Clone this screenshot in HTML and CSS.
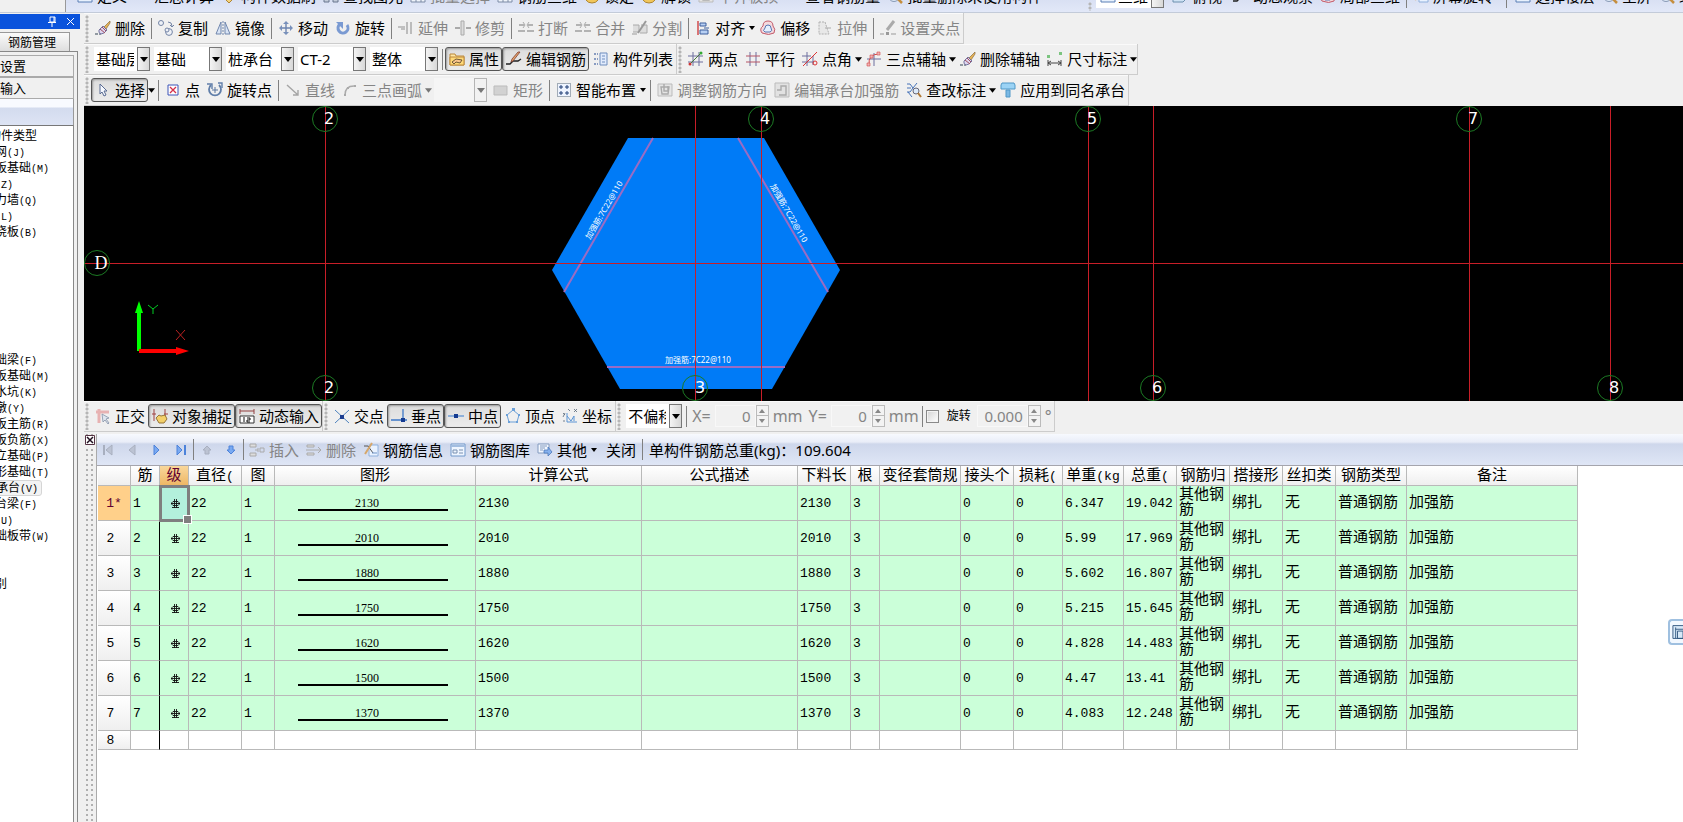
FILE: index.html
```html
<!DOCTYPE html>
<html lang="zh-CN">
<head>
<meta charset="utf-8">
<title>钢筋管理</title>
<link rel="stylesheet" href="styles.css">
</head>
<body>
<svg class="sprite" aria-hidden="true">
  <symbol id="brush" viewBox="0 0 16 16"><path d="M0 14h3m1 0h2" stroke="#345" /><path d="M15 1 9 7l2 2 4-6z" fill="#e7b557" stroke="#8b6b3d" stroke-width=".7"/><path d="M8 6 4 10q-1 3 2 4 3 0 6-4z" fill="#ddd6ef" stroke="#5a5b8c" stroke-width=".8"/><path d="m5 9 5 4M7 7l4 4" stroke="#a25062"/></symbol>
  <symbol id="copy" viewBox="0 0 16 16"><g fill="#eef1f7" stroke="#7384a5"><circle cx="3" cy="3" r="2.5"/><circle cx="11" cy="12" r="3.4"/><circle cx="9" cy="10" r="2"/><path d="M10 2q4 0 4 4m-2-1 2 2 2-2" fill="none"/></g></symbol>
  <symbol id="mirror" viewBox="0 0 16 16"><path d="M6 2v12H1zM10 2v12h5z" fill="#d8e4f6" stroke="#7187ad"/><path d="M8 1v14" stroke="#7187ad" stroke-dasharray="2 1"/></symbol>
  <symbol id="move" viewBox="0 0 16 16"><path d="M8 2v12M2 8h12" stroke="#6c84b0" stroke-width="1.4"/><path d="m5 4 3-3 3 3zM5 12l3 3 3-3zM4 5 1 8l3 3zM12 5l3 3-3 3z" fill="#7890ba"/></symbol>
  <symbol id="rotate" viewBox="0 0 16 16"><path d="M5 4a5 5 0 1 0 7 1" fill="none" stroke="#7a9ad2" stroke-width="3"/><path d="M1 2h7v7z" fill="#7a9ad2"/></symbol>
  <symbol id="extend" viewBox="0 0 16 16"><path d="M0 7h7M3 9h4M9 2v12M13 2v12" stroke="#b0b0b0" stroke-width="1.6"/></symbol>
  <symbol id="trim" viewBox="0 0 16 16"><path d="M0 8h5m6 0h5" stroke="#aaa" stroke-width="2"/><path d="M6 1h3v14H6z" fill="#ddd" stroke="#aaa"/></symbol>
  <symbol id="break" viewBox="0 0 16 16"><path d="M1 5h5M10 5h5M0 11h7M9 11h7" stroke="#b3b3b3" stroke-width="2"/><path d="m5 2 2 3-2 3M11 2 9 5l2 3" fill="none" stroke="#aaa"/></symbol>
  <symbol id="split" viewBox="0 0 16 16"><path d="M1 5h6v7H1m8-7h6v8H8" fill="#ddd" stroke="#aaa"/><path d="m14 1-8 12" stroke="#999" stroke-width="2"/><path d="M0 14h5" stroke="#999"/></symbol>
  <symbol id="align" viewBox="0 0 16 16"><path d="M3 1v14" stroke="#c33" stroke-width="1.3"/><path d="M5 3h6v3H5zM5 10h8v4H5z" fill="#b8d0f3" stroke="#3d5f9d"/><path d="M9 8h5" stroke="#3d5f9d"/></symbol>
  <symbol id="offset" viewBox="0 0 16 16"><path d="M8 1q5 0 5 5 3 3 1 7-5 3-12 0-3-4 1-7 0-5 5-5z" fill="#f4d9dd" stroke="#c25b6b"/><path d="M8 5q3 0 3 3 2 3-1 4H5q-3-1 0-4 0-3 3-3z" fill="#e4effc" stroke="#5577b5"/></symbol>
  <symbol id="stretch" viewBox="0 0 16 16"><path d="M2 2h6l4 12H2z" fill="#e8e8e8" stroke="#b0b0b0" stroke-dasharray="2 1"/><path d="M8 8h6" stroke="#aaa"/></symbol>
  <symbol id="grip" viewBox="0 0 16 16"><path d="m14 1-7 9" stroke="#aaa" stroke-width="3"/><path d="M0 14h4m7 0h5" stroke="#999"/><path d="M6 12h3v3H6z" fill="#999"/></symbol>
  <symbol id="props" viewBox="0 0 16 16"><path d="M1 3h5l1 2h8v9H1z" fill="#ffe7a3" stroke="#bc883b"/><path d="M1 6h14v8H1z" fill="#ffd978" stroke="#bc883b"/><path d="m3 11 4-3 6 1-2 3-4-1-2 2z" fill="#f9c58e" stroke="#4d3c25" stroke-width=".8"/></symbol>
  <symbol id="editbar" viewBox="0 0 16 16"><path d="M0 13h4l3-3h5l3-2" fill="none" stroke="#222" stroke-width="1.4"/><path d="m14 1-7 9-2 1 1-3 6-7z" fill="#e6a66a" stroke="#7c3c33" stroke-width=".8"/></symbol>
  <symbol id="list" viewBox="0 0 16 16"><path d="M1 3h4M1 8h4M1 13h4" stroke="#889bc1" stroke-width="2" stroke-dasharray="2 1"/><path d="M7 2h7v12H7z" fill="#e1ebfc" stroke="#6f8dbd"/><path d="M9 5h3M9 8h3M9 11h3" stroke="#6f8dbd"/></symbol>
  <symbol id="twopt" viewBox="0 0 16 16"><path d="M5 1v14M11 1v14M0 5h15M0 11h15" stroke="#6d6f9e"/><path d="M2 13 13 2" stroke="#4b7b3e"/><circle cx="2" cy="13" r="1.5" fill="#c33"/><circle cx="13" cy="2" r="1.5" fill="#3a3"/></symbol>
  <symbol id="parallel" viewBox="0 0 16 16"><path d="M5 1v14M11 1v14" stroke="#6d6f9e"/><path d="M1 5h14M1 11h14" stroke="#b65566"/></symbol>
  <symbol id="ptangle" viewBox="0 0 16 16"><path d="M5 1v14M11 5v9M0 5h9M0 11h12" stroke="#6d6f9e"/><path d="M1 15 15 1" stroke="#d33"/><circle cx="13" cy="12" r="2" fill="none" stroke="#d33"/></symbol>
  <symbol id="threept" viewBox="0 0 16 16"><path d="M8 2v13M1 8h14" stroke="#6d6f9e"/><path d="M3 14Q2 3 13 3" fill="none" stroke="#d34a4a"/><path d="M11 1h3v3h-3zM1 12h3v3H1zM4 4h3v3H4z" fill="#f0b4b4" stroke="#d34a4a" stroke-width=".6"/></symbol>
  <symbol id="dim" viewBox="0 0 16 16"><path d="M1 9v6m13-6v6M1 12h13" stroke="#444"/><path d="m4 10-3 2 3 2m7-4 3 2-3 2" fill="none" stroke="#444"/><path d="M0 4h3v3H0zM12 1h3v3h-3z" fill="#7bc47f"/></symbol>
  <symbol id="cursor" viewBox="0 0 16 16"><path d="M5 2v10l2-2 2 4 2-1-2-4h3z" fill="#f6f9ff" stroke="#596b92"/></symbol>
  <symbol id="point" viewBox="0 0 16 16"><path d="M3 3h10v10H3z" fill="#fff" stroke="#3d55b8"/><path d="m5 5 6 6m0-6-6 6" stroke="#d32f4b" stroke-width="1.3"/></symbol>
  <symbol id="rotpt" viewBox="0 0 16 16"><path d="M4 3a6 6 0 1 0 8 0" fill="none" stroke="#607ea9" stroke-width="1.8"/><path d="M0 2h5v5M15 6V1h-4" fill="none" stroke="#607ea9" stroke-width="1.4"/><path d="M8 5v6M5 8h6" stroke="#58759e"/></symbol>
  <symbol id="line" viewBox="0 0 16 16"><path d="m2 3 11 10m0-5v5H8" fill="none" stroke="#a5a5a5" stroke-width="1.4"/></symbol>
  <symbol id="arc" viewBox="0 0 16 16"><path d="M3 13Q3 4 12 4" fill="none" stroke="#aaa" stroke-width="1.4"/><path d="M2 12h2v2H2zM5 5h2v2H5zM12 3h2v2h-2z" fill="#aaa"/></symbol>
  <symbol id="rect" viewBox="0 0 16 16"><path d="M1 4h13v9H1z" fill="#d2d2d2" stroke="#bbb"/></symbol>
  <symbol id="smart" viewBox="0 0 16 16"><path d="M1.500 1.500h13v13h-13z" fill="#eef4ff" stroke="#567" stroke-dasharray="1 1"/><path d="M5 3v4M3 5h4M11 3v4M9 5h4M5 9v4M3 11h4M11 9v4M9 11h4" stroke="#1f3d75"/></symbol>
  <symbol id="adjust" viewBox="0 0 16 16"><path d="M1 2h14v12H1z" fill="#e5e5e5" stroke="#bbb"/><path d="M4 5h8l-1 7H5zM7 2v7h4V4" fill="none" stroke="#aaa" stroke-width="1.4"/></symbol>
  <symbol id="editcap" viewBox="0 0 16 16"><path d="M1 1h14v14H1z" fill="#e2e2e2" stroke="#bbb"/><path d="M3 8h4V4h5v9H5" fill="none" stroke="#aaa" stroke-width="1.4"/></symbol>
  <symbol id="checkdim" viewBox="0 0 16 16"><path d="M1 2h3l3 4-3 4H1m0-4h4M2 10l4 5M11 1 7 6" fill="none" stroke="#4673b8"/><circle cx="10" cy="9" r="3" fill="#dceafa" stroke="#667"/><path d="m12 11 3 4" stroke="#b27a36" stroke-width="2"/></symbol>
  <symbol id="apply" viewBox="0 0 16 16"><path d="M2 1h12l1 2v4H1V3z" fill="#9bd3f5" stroke="#5198c7"/><path d="M6 8h4v7H6z" fill="#7bb8e4" stroke="#5198c7"/></symbol>
  <symbol id="ortho" viewBox="0 0 16 16"><path d="M1 4h13M4 1v14" stroke="#e7b2b2" stroke-width="3"/><path d="m7 6 7 4-3 1 3 4-1 1-3-4-2 2z" fill="#dfe5ee" stroke="#8492a7" stroke-width=".8"/></symbol>
  <symbol id="snap" viewBox="0 0 16 16"><path d="M2 1v12M13 1v12M0 6h4m8 0h4" stroke="#a04040"/><path d="m4 10 3-3 2 1 4-1 2 4-3 4H7z" fill="#f3d06a" stroke="#8c6a2c" stroke-width=".9"/></symbol>
  <symbol id="dyn" viewBox="0 0 16 16"><path d="M1 1v5M15 1v5M1 3h14" stroke="#934141"/><path d="M1 8h14v7H1z" fill="#fff" stroke="#333"/><path d="M5 9v5M8 10h3v2H8v2h3" fill="none" stroke="#111"/></symbol>
  <symbol id="cross" viewBox="0 0 16 16"><path d="m1 2 14 13M15 2 1 15" stroke="#5084bf"/><path d="M6 7h4v4H6z" fill="#1c3d90"/></symbol>
  <symbol id="perp" viewBox="0 0 16 16"><path d="M12 1v11M0 12h16" stroke="#3e78c7" stroke-width="1.3"/><path d="M10 10h4v4h-4z" fill="#143b91"/></symbol>
  <symbol id="mid" viewBox="0 0 16 16"><path d="M0 8h16" stroke="#5f93d4" stroke-width="1.3"/><path d="M6 6h4v4H6z" fill="#143b91"/></symbol>
  <symbol id="vertex" viewBox="0 0 16 16"><path d="m8 2 6 5-2 7H4L2 7z" fill="none" stroke="#6ba0d8"/><path d="M7 0h3v3H7zM1 6h2v2H1zM13 6h2v2h-2zM3 13h2v2H3zM11 13h2v2h-2z" fill="#6ba0d8"/></symbol>
  <symbol id="coord" viewBox="0 0 16 16"><path d="M5 5v9h10M5 8l4 5 3-5v5" fill="none" stroke="#5b94d4"/><path d="m1 5 2 2m0-2-2 4M12 1l3 3m0-3-3 3M6 1l2 2M1 13h2" stroke="#567" stroke-width=".8"/></symbol>
  <symbol id="ins" viewBox="0 0 16 16"><path d="M1 2h6v3H1zM1 11h6v3H1z" fill="#ddd" stroke="#aaa"/><path d="M6 8h3m0-2v4m2-4h4v4h-4z" fill="none" stroke="#aaa"/></symbol>
  <symbol id="del" viewBox="0 0 16 16"><path d="M1 3h7v2H1zM1 11h7v2H1z" fill="#ddd" stroke="#aaa"/><path d="M0 8h15m-3-3 3 3-3 3" fill="none" stroke="#aaa"/></symbol>
  <symbol id="info" viewBox="0 0 16 16"><path d="M6 3h9v11H6z" fill="#e9f2ff" stroke="#8fb0dc"/><path d="M1 4h4l5 7" fill="none" stroke="#555"/><path d="M9 1 2 12" stroke="#d6a76b" stroke-width="2"/><path d="M9 11h5" stroke="#6e93c7"/></symbol>
  <symbol id="lib" viewBox="0 0 16 16"><path d="M1 2h14v12H1z" fill="#eef5ff" stroke="#7198ca"/><path d="M1 4h14" stroke="#a2bde0" stroke-width="2"/><path d="M3 8h4v3H3zM9 8h4m-4 3h4" fill="none" stroke="#7890b0"/></symbol>
  <symbol id="other" viewBox="0 0 16 16"><path d="M1 2h11v9H1z" fill="#f2f7ff" stroke="#829abf"/><path d="M3 4h7M3 6h5M3 8h3" stroke="#829abf"/><path d="M7 8h4V5l4 5-4 4v-3H7z" fill="#86b1ee" stroke="#4c79ba" stroke-width=".8"/></symbol>
  <symbol id="first" viewBox="0 0 16 16"><path d="M3 3v10" stroke="#a8afbf" stroke-width="2"/><path d="M11 3v10L5 8z" fill="#bcc3d3" stroke="#a8afbf"/></symbol>
  <symbol id="prev" viewBox="0 0 16 16"><path d="M10 3v10L4 8z" fill="#bcc3d3" stroke="#a8afbf"/></symbol>
  <symbol id="next" viewBox="0 0 16 16"><path d="M5 3v10l5-5z" fill="#79a9f1" stroke="#4c82da"/></symbol>
  <symbol id="last" viewBox="0 0 16 16"><path d="M4 3v10l5-5z" fill="#79a9f1" stroke="#4c82da"/><path d="M12 3v10" stroke="#4c82da" stroke-width="2"/></symbol>
  <symbol id="up" viewBox="0 0 16 16"><path d="m8 4 4 4h-2v4H6V8H4z" fill="#bcc3d3" stroke="#a8afbf"/></symbol>
  <symbol id="down" viewBox="0 0 16 16"><path d="m8 12 4-4h-2V4H6v4H4z" fill="#79a9f1" stroke="#4c82da"/></symbol>
  <symbol id="doc" viewBox="0 0 16 16"><path d="M1 3h14v11H1z" fill="#e8f1fd" stroke="#5a7fb5"/><path d="M3 11h10" stroke="#5a7fb5" stroke-width="2"/></symbol>
  <symbol id="tag" viewBox="0 0 16 16"><path d="m8 15-6-6 6-6 6 6z" fill="#f3d27b" stroke="#ae8436"/></symbol>
  <symbol id="bino" viewBox="0 0 16 16"><path d="M1 5h5v9H1zM10 5h5v9h-5z" fill="#c3ccda" stroke="#68768e"/></symbol>
  <symbol id="gridi" viewBox="0 0 16 16"><path d="M1 1h14v13H1zM1 10h14M6 1v13M11 1v13" fill="#eef3fa" stroke="#7c8ba6"/></symbol>
  <symbol id="lock" viewBox="0 0 16 16"><path d="M2 5h12v7q-2 3-6 3t-6-3z" fill="#f1c65b" stroke="#ad8430"/></symbol>
  <symbol id="lens" viewBox="0 0 16 16"><circle cx="7" cy="8" r="5.5" fill="#dfeaf8" stroke="#8899b5"/><path d="m11 11 4 4" stroke="#c58e3e" stroke-width="2.5"/></symbol>
  <symbol id="cube" viewBox="0 0 16 16"><path d="M1 6 5 2h10v8l-4 4H1z" fill="#cfe2f4" stroke="#6d90ae"/></symbol>
  <symbol id="tri" viewBox="0 0 8 5"><path d="M0 0h8L4 5z"/></symbol>
  <symbol id="tris" viewBox="0 0 6 4"><path d="M0 0h6L3 4z"/></symbol>
  <symbol id="triup" viewBox="0 0 6 4"><path d="M0 4h6L3 0z"/></symbol>
  <symbol id="bar3" viewBox="0 0 11 12"><path d="M4.500 1v9M6.500 1v9M2 9.500h7M1 5.500h9" stroke="#111" stroke-width=".9" fill="none"/><path d="M3 3.500h5L9.500 5v1L8 7.500H3L1.500 6V5z" fill="none" stroke="#111" stroke-width=".9"/></symbol>
</svg>

<header class="topbar">
  <div class="topbar-side"></div>
  <div class="topbar-tools">
    <button class="tool"><svg class="ic"><use href="#doc"/></svg>定义</button>
    <button class="tool"><svg class="ic"></svg>汇总计算</button>
    <button class="tool"><svg class="ic"><use href="#tag"/></svg>构件数据刷</button>
    <button class="tool"><svg class="ic"><use href="#bino"/></svg>查找图元</button>
    <button class="tool off"><svg class="ic"><use href="#gridi"/></svg>批量选择</button>
    <button class="tool"><svg class="ic"><use href="#gridi"/></svg>钢筋三维</button>
    <button class="tool"><svg class="ic"><use href="#lock"/></svg>锁定</button>
    <button class="tool"><svg class="ic"><use href="#lock"/></svg>解锁</button>
    <button class="tool off"><svg class="ic"><use href="#adjust"/></svg>平齐板顶</button>
    <button class="tool"><svg class="ic"></svg>查看钢筋量</button>
    <button class="tool"><svg class="ic"><use href="#lens"/></svg>批量删除未使用构件</button>
  </div>
  <span class="dots"></span>
  <div class="topbar-tools view-tools">
    <span class="combo top-combo"><svg class="ic"><use href="#doc"/></svg><select aria-label="视图"><option>三维</option></select><span class="arrow"></span></span>
    <button class="tool"><svg class="ic"><use href="#cube"/></svg>俯视</button>
    <button class="tool wide"><svg class="ic"><use href="#editbar"/></svg>动态观察</button>
    <button class="tool"><svg class="ic"><use href="#offset"/></svg>局部三维</button>
    <i class="sep"></i>
    <button class="tool"><svg class="ic"><use href="#info"/></svg>屏幕旋转</button>
    <i class="sep wide-sep"></i>
    <button class="tool"><svg class="ic"><use href="#doc"/></svg>选择楼层</button>
    <button class="tool"><svg class="ic"><use href="#lens"/></svg>全屏</button>
    <button class="tool"><svg class="ic"><use href="#lens"/></svg>缩放</button>
  </div>
</header>

<div class="work">
  <aside class="side">
    <div class="side-title">
      <button aria-label="固定"><svg width="10" height="11" viewBox="0 0 10 11"><path d="M3 1h5v5H3zM1 6.500h8M5 7v4" fill="none" stroke="#fff"/><path d="M7 1v5" stroke="#fff"/></svg></button>
      <button aria-label="关闭面板"><svg width="9" height="9" viewBox="0 0 9 9"><path d="m1 1 7 7m0-7L1 8" stroke="#fff"/></svg></button>
    </div>
    <button class="side-tab">钢筋管理</button>
    <div class="side-body">
      <button class="side-btn">设置</button>
      <button class="side-btn">输入</button>
      <div class="side-band"></div>
      <ul class="tree">
        <li class="root">构件类型</li>
        <li>网<span>(J)</span></li>
        <li>板基础<span>(M)</span></li>
        <li><span>(Z)</span></li>
        <li>力墙<span>(Q)</span></li>
        <li><span>(L)</span></li>
        <li>浇板<span>(B)</span></li>
        <li></li><li></li><li></li><li></li><li></li><li></li><li></li>
        <li>础梁<span>(F)</span></li>
        <li>板基础<span>(M)</span></li>
        <li>水坑<span>(K)</span></li>
        <li>墩<span>(Y)</span></li>
        <li>板主筋<span>(R)</span></li>
        <li>板负筋<span>(X)</span></li>
        <li>立基础<span>(P)</span></li>
        <li>形基础<span>(T)</span></li>
        <li class="chosen">承台<span>(V)</span></li>
        <li>台梁<span>(F)</span></li>
        <li><span>(U)</span></li>
        <li>础板带<span>(W)</span></li>
        <li></li><li></li>
        <li>别</li>
      </ul>
    </div>
  </aside>

  <main class="main">
    <div class="bars">
      <div class="bar">
        <span class="dots"></span>
        <button class="tool"><svg class="ic"><use href="#brush"/></svg>删除</button>
        <i class="sep"></i>
        <button class="tool"><svg class="ic"><use href="#copy"/></svg>复制</button>
        <button class="tool"><svg class="ic"><use href="#mirror"/></svg>镜像</button>
        <i class="sep"></i>
        <button class="tool"><svg class="ic"><use href="#move"/></svg>移动</button>
        <button class="tool"><svg class="ic"><use href="#rotate"/></svg>旋转</button>
        <i class="sep"></i>
        <button class="tool off"><svg class="ic"><use href="#extend"/></svg>延伸</button>
        <button class="tool off"><svg class="ic"><use href="#trim"/></svg>修剪</button>
        <i class="sep"></i>
        <button class="tool off"><svg class="ic"><use href="#break"/></svg>打断</button>
        <button class="tool off"><svg class="ic"><use href="#break"/></svg>合并</button>
        <button class="tool off"><svg class="ic"><use href="#split"/></svg>分割</button>
        <i class="sep"></i>
        <button class="tool"><svg class="ic"><use href="#align"/></svg>对齐<svg class="caret small"><use href="#tris"/></svg></button>
        <button class="tool"><svg class="ic"><use href="#offset"/></svg>偏移</button>
        <button class="tool off"><svg class="ic"><use href="#stretch"/></svg>拉伸</button>
        <i class="sep"></i>
        <button class="tool off"><svg class="ic"><use href="#grip"/></svg>设置夹点</button>
      </div>

      <div class="bar-row">
        <div class="bar">
          <span class="dots"></span>
          <span class="combo narrow"><select aria-label="楼层"><option>基础层</option></select><span class="arrow"><svg><use href="#tri"/></svg></span></span>
          <span class="combo"><select aria-label="分类"><option>基础</option></select><span class="arrow"><svg><use href="#tri"/></svg></span></span>
          <span class="combo"><select aria-label="构件类型"><option>桩承台</option></select><span class="arrow"><svg><use href="#tri"/></svg></span></span>
          <span class="combo"><select aria-label="构件"><option>CT-2</option></select><span class="arrow"><svg><use href="#tri"/></svg></span></span>
          <span class="combo"><select aria-label="范围"><option>整体</option></select><span class="arrow"><svg><use href="#tri"/></svg></span></span>
          <i class="sep"></i>
          <button class="tool on"><svg class="ic"><use href="#props"/></svg>属性</button>
          <button class="tool on"><svg class="ic"><use href="#editbar"/></svg>编辑钢筋</button>
          <button class="tool"><svg class="ic"><use href="#list"/></svg>构件列表</button>
        </div>
        <div class="bar">
          <span class="dots"></span>
          <button class="tool"><svg class="ic"><use href="#twopt"/></svg>两点</button>
          <button class="tool"><svg class="ic"><use href="#parallel"/></svg>平行</button>
          <button class="tool"><svg class="ic"><use href="#ptangle"/></svg>点角</button><svg class="caret"><use href="#tri"/></svg>
          <button class="tool"><svg class="ic"><use href="#threept"/></svg>三点辅轴</button><svg class="caret"><use href="#tri"/></svg>
          <button class="tool"><svg class="ic"><use href="#brush"/></svg>删除辅轴</button>
          <button class="tool"><svg class="ic"><use href="#dim"/></svg>尺寸标注</button><svg class="caret"><use href="#tri"/></svg>
        </div>
      </div>

      <div class="bar">
        <span class="dots"></span>
        <button class="tool on"><svg class="ic"><use href="#cursor"/></svg>选择</button><svg class="caret"><use href="#tri"/></svg>
        <i class="sep"></i>
        <button class="tool"><svg class="ic"><use href="#point"/></svg>点</button>
        <button class="tool"><svg class="ic"><use href="#rotpt"/></svg>旋转点</button>
        <i class="sep"></i>
        <button class="tool off"><svg class="ic"><use href="#line"/></svg>直线</button>
        <button class="tool off"><svg class="ic"><use href="#arc"/></svg>三点画弧</button><svg class="caret off"><use href="#tri"/></svg>
        <span class="combo narrow disabled"><select aria-label="半径" disabled><option></option></select><span class="arrow"><svg><use href="#tri"/></svg></span></span>
        <button class="tool off"><svg class="ic"><use href="#rect"/></svg>矩形</button>
        <i class="sep"></i>
        <button class="tool"><svg class="ic"><use href="#smart"/></svg>智能布置<svg class="caret small"><use href="#tris"/></svg></button>
        <i class="sep"></i>
        <button class="tool off"><svg class="ic"><use href="#adjust"/></svg>调整钢筋方向</button>
        <button class="tool off"><svg class="ic"><use href="#editcap"/></svg>编辑承台加强筋</button>
        <button class="tool"><svg class="ic"><use href="#checkdim"/></svg>查改标注</button><svg class="caret"><use href="#tri"/></svg>
        <button class="tool"><svg class="ic"><use href="#apply"/></svg>应用到同名承台</button>
      </div>
    </div>

    <svg class="canvas" role="img" aria-label="承台平面图">
      <path d="M544 32h136l76 132-68 119H536L468 164z" fill="#007bf7"/>
      <g stroke="#9a6cc4" stroke-width="2"><path d="m569 32-89 154M654 32l90 154M523 261h178"/></g>
      <g stroke="#c81e28">
        <path d="M241.500 0v295M611.500 0v295M677.500 0v295M1004.500 0v295M1069.500 0v295M1385.500 0v295M1526.500 0v295"/>
        <line x1="0" x2="100%" y1="157.500" y2="157.500"/>
      </g>
      <g fill="none" stroke="#1c7a24">
        <circle cx="241" cy="13" r="12.500"/><circle cx="677" cy="13" r="12.500"/><circle cx="1004" cy="13" r="12.500"/><circle cx="1385" cy="13" r="12.500"/>
        <circle cx="241" cy="282" r="12.500"/><circle cx="611" cy="282" r="12.500"/><circle cx="1069" cy="282" r="12.500"/><circle cx="1526" cy="282" r="12.500"/>
        <circle cx="13" cy="157" r="12.500"/>
      </g>
      <g class="axis">
        <text x="245" y="18">2</text><text x="681" y="18">4</text><text x="1008" y="18">5</text><text x="1389" y="18">7</text>
        <text x="245" y="287">2</text><text x="616" y="287">3</text><text x="1073" y="287">6</text><text x="1530" y="287">8</text>
        <text class="serif" x="17" y="163">D</text>
      </g>
      <g class="rebar">
        <text x="581" y="257">加强筋:7C22@110</text>
        <text transform="translate(506 134) rotate(-60)">加强筋:7C22@110</text>
        <text transform="translate(686 80) rotate(60)">加强筋:7C22@110</text>
      </g>
      <path d="M55 245v-39" stroke="#0f0" stroke-width="4"/><path d="m51 207 4-12 4 12z" fill="#0f0"/>
      <path d="M55 245h38" stroke="#f00" stroke-width="4"/><path d="m92 241 13 4-13 4z" fill="#f00"/>
      <path d="m64 199 5 4 5-4m-5 4v5" fill="none" stroke="#0c2"/><path d="m92 224 9 10m0-10-9 10" stroke="#b22"/>
    </svg>

    <div class="bar-row status">
      <div class="bar">
        <span class="dots"></span>
        <button class="tool"><svg class="ic"><use href="#ortho"/></svg>正交</button>
        <button class="tool on"><svg class="ic"><use href="#snap"/></svg>对象捕捉</button>
        <button class="tool on"><svg class="ic"><use href="#dyn"/></svg>动态输入</button>
      </div>
      <div class="bar">
        <span class="dots"></span>
        <button class="tool"><svg class="ic"><use href="#cross"/></svg>交点</button>
        <button class="tool on"><svg class="ic"><use href="#perp"/></svg>垂点</button>
        <button class="tool on"><svg class="ic"><use href="#mid"/></svg>中点</button>
        <button class="tool"><svg class="ic"><use href="#vertex"/></svg>顶点</button>
        <button class="tool"><svg class="ic"><use href="#coord"/></svg>坐标</button>
      </div>
      <div class="bar">
        <span class="dots"></span>
        <span class="combo narrow"><select aria-label="偏移方式"><option>不偏移</option></select><span class="arrow"><svg><use href="#tri"/></svg></span></span>
        <i class="sep"></i>
        <label class="num" for="ox">X=</label>
        <span class="spin"><input id="ox" value="0" disabled><span class="steps"><svg><use href="#triup"/></svg><svg><use href="#tris"/></svg></span></span>
        <span class="num">mm</span>
        <label class="num" for="oy">Y=</label>
        <span class="spin"><input id="oy" value="0" disabled><span class="steps"><svg><use href="#triup"/></svg><svg><use href="#tris"/></svg></span></span>
        <span class="num last">mm</span>
        <i class="sep"></i>
        <input class="check" type="checkbox" id="rot"><label class="rot" for="rot">旋转</label>
        <span class="spin angle"><input aria-label="角度" value="0.000" disabled><span class="steps"><svg><use href="#triup"/></svg><svg><use href="#tris"/></svg></span></span>
        <span class="num degree">°</span>
      </div>
    </div>

    <section class="dock">
      <div class="dock-grip">
        <button class="dock-close" aria-label="关闭面板"><svg width="10" height="10" viewBox="0 0 10 10"><path d="M.5.5h9v9h-9z" fill="#fff" stroke="#534"/><path d="m2 2 6 6m0-6L2 8" stroke="#201020" stroke-width="1.500"/></svg></button>
      </div>
      <div class="dock-main">
        <div class="dock-bar">
          <button class="nav" aria-label="首条"><svg class="ic"><use href="#first"/></svg></button>
          <button class="nav" aria-label="上一条"><svg class="ic"><use href="#prev"/></svg></button>
          <button class="nav" aria-label="下一条"><svg class="ic"><use href="#next"/></svg></button>
          <button class="nav" aria-label="末条"><svg class="ic"><use href="#last"/></svg></button>
          <i class="sep"></i>
          <button class="nav" aria-label="上移"><svg class="ic"><use href="#up"/></svg></button>
          <button class="nav" aria-label="下移"><svg class="ic"><use href="#down"/></svg></button>
          <i class="sep"></i>
          <button class="tool off"><svg class="ic"><use href="#ins"/></svg>插入</button>
          <button class="tool off"><svg class="ic"><use href="#del"/></svg>删除</button>
          <button class="tool"><svg class="ic"><use href="#info"/></svg>钢筋信息</button>
          <button class="tool"><svg class="ic"><use href="#lib"/></svg>钢筋图库</button>
          <button class="tool"><svg class="ic"><use href="#other"/></svg>其他<svg class="caret small"><use href="#tris"/></svg></button>
          <button class="tool close-btn">关闭</button>
          <i class="sep"></i>
          <span class="total">单构件钢筋总重(kg)：109.604</span>
        </div>
        <table class="grid">
          <colgroup><col class="w33"><col class="w29"><col class="w29"><col class="w53"><col class="w33"><col class="w201"><col class="w166"><col class="w156"><col class="w53"><col class="w29"><col class="w81"><col class="w53"><col class="w49"><col class="w61"><col class="w53"><col class="w53"><col class="w53"><col class="w53"><col class="w71"><col class="w171"></colgroup>
          <thead><tr><th></th><th>筋</th><th class="hot">级</th><th>直径<b>(</b></th><th>图</th><th>图形</th><th>计算公式</th><th>公式描述</th><th>下料长</th><th>根</th><th>变径套筒规</th><th>接头个</th><th>损耗<b>(</b></th><th>单重<b>(kg</b></th><th>总重<b>(</b></th><th>钢筋归</th><th>搭接形</th><th>丝扣类</th><th>钢筋类型</th><th>备注</th></tr></thead>
          <tbody>
            <tr><th class="hot">1*</th><td>1</td><td class="grade picked"><svg><use href="#bar3"/></svg></td><td>22</td><td>1</td><td><span class="shape">2130</span></td><td>2130</td><td></td><td>2130</td><td>3</td><td></td><td>0</td><td>0</td><td>6.347</td><td>19.042</td><td class="cn">其他钢筋</td><td class="cn">绑扎</td><td class="cn">无</td><td class="cn">普通钢筋</td><td class="cn">加强筋</td></tr>
            <tr><th>2</th><td>2</td><td class="grade"><svg><use href="#bar3"/></svg></td><td>22</td><td>1</td><td><span class="shape">2010</span></td><td>2010</td><td></td><td>2010</td><td>3</td><td></td><td>0</td><td>0</td><td>5.99</td><td>17.969</td><td class="cn">其他钢筋</td><td class="cn">绑扎</td><td class="cn">无</td><td class="cn">普通钢筋</td><td class="cn">加强筋</td></tr>
            <tr><th>3</th><td>3</td><td class="grade"><svg><use href="#bar3"/></svg></td><td>22</td><td>1</td><td><span class="shape">1880</span></td><td>1880</td><td></td><td>1880</td><td>3</td><td></td><td>0</td><td>0</td><td>5.602</td><td>16.807</td><td class="cn">其他钢筋</td><td class="cn">绑扎</td><td class="cn">无</td><td class="cn">普通钢筋</td><td class="cn">加强筋</td></tr>
            <tr><th>4</th><td>4</td><td class="grade"><svg><use href="#bar3"/></svg></td><td>22</td><td>1</td><td><span class="shape">1750</span></td><td>1750</td><td></td><td>1750</td><td>3</td><td></td><td>0</td><td>0</td><td>5.215</td><td>15.645</td><td class="cn">其他钢筋</td><td class="cn">绑扎</td><td class="cn">无</td><td class="cn">普通钢筋</td><td class="cn">加强筋</td></tr>
            <tr><th>5</th><td>5</td><td class="grade"><svg><use href="#bar3"/></svg></td><td>22</td><td>1</td><td><span class="shape">1620</span></td><td>1620</td><td></td><td>1620</td><td>3</td><td></td><td>0</td><td>0</td><td>4.828</td><td>14.483</td><td class="cn">其他钢筋</td><td class="cn">绑扎</td><td class="cn">无</td><td class="cn">普通钢筋</td><td class="cn">加强筋</td></tr>
            <tr><th>6</th><td>6</td><td class="grade"><svg><use href="#bar3"/></svg></td><td>22</td><td>1</td><td><span class="shape">1500</span></td><td>1500</td><td></td><td>1500</td><td>3</td><td></td><td>0</td><td>0</td><td>4.47</td><td>13.41</td><td class="cn">其他钢筋</td><td class="cn">绑扎</td><td class="cn">无</td><td class="cn">普通钢筋</td><td class="cn">加强筋</td></tr>
            <tr><th>7</th><td>7</td><td class="grade"><svg><use href="#bar3"/></svg></td><td>22</td><td>1</td><td><span class="shape">1370</span></td><td>1370</td><td></td><td>1370</td><td>3</td><td></td><td>0</td><td>0</td><td>4.083</td><td>12.248</td><td class="cn">其他钢筋</td><td class="cn">绑扎</td><td class="cn">无</td><td class="cn">普通钢筋</td><td class="cn">加强筋</td></tr>
            <tr class="blank"><th>8</th><td></td><td></td><td></td><td></td><td></td><td></td><td></td><td></td><td></td><td></td><td></td><td></td><td></td><td></td><td></td><td></td><td></td><td></td><td></td></tr>
          </tbody>
        </table>
        <button class="float-btn" aria-label="浮动工具"><svg width="12" height="16" viewBox="0 0 12 16"><path d="M1 1h12v14H1zM4 3v12M4 5h8M6 7h6v8H6z" fill="#d7e8f7" stroke="#31567f"/></svg></button>
      </div>
    </section>
  </main>
</div>
</body>
</html>
```

FILE: styles.css
```css
* { box-sizing: border-box; }

body {
  margin: 0;
  min-height: 100vh;
  display: flex;
  flex-direction: column;
  overflow-x: hidden;
  background: #f0f0f0;
  color: #000;
  font: 15px/20px "Noto Sans", "Noto Sans CJK SC", sans-serif;
}

button, select, input { font: inherit; color: inherit; }
button { border: 0; padding: 0; background: none; }

.sprite { position: absolute; width: 0; height: 0; }
.ic { width: 16px; height: 16px; flex: none; }

/* Clipped strip of the main toolbar */
.topbar {
  display: flex;
  height: 13px;
  overflow: hidden;
  background: linear-gradient(#d9e0f3, #e2e8f8);
  border-bottom: 1px solid #c3cbd9;
}
.topbar-side { flex: none; width: 66px; background: #f0f0f0; border-right: 1px solid #999; }
.topbar-tools { display: flex; align-items: flex-end; flex: none; height: 8px; padding-left: 7px; }
.topbar-tools .tool { height: 24px; }
.topbar > .dots { margin-left: auto; }
.view-tools { flex: 0 0 587px; min-width: 0; padding-left: 0; }
.view-tools .sep { align-self: flex-end; }
.view-tools .wide { margin-left: 4px; }
.view-tools .wide-sep { margin-left: 10px; margin-right: 4px; }
.top-combo { width: 60px; height: 24px; margin-right: 0; }
.top-combo .ic { margin: 4px 0 0 4px; }

.work { display: flex; flex: 1; }

/* Left panel */
.side {
  flex: none;
  width: 84px;
  padding-top: 1px;
  display: flex;
  flex-direction: column;
  align-items: flex-start;
  overflow: hidden;
}
.side-title {
  width: 80px;
  height: 15px;
  display: flex;
  justify-content: flex-end;
  align-items: center;
  gap: 9px;
  padding-right: 5px;
  background: #0a53dc;
}
.side-title button { display: flex; }
.side-tab {
  width: 70px;
  height: 19px;
  margin-top: 3px;
  padding-left: 8px;
  text-align: left;
  font-size: 12px;
  line-height: 20px;
  background: linear-gradient(#fafafa, #dedede);
  border: 1px solid #999;
  border-width: 1px 1px 0 0;
}
.side-body {
  flex: 1;
  width: 78px;
  padding: 3px 3px 0 0;
  display: flex;
  flex-direction: column;
  border: 1px solid #888;
  border-width: 1px 1px 0 0;
}
.side-btn {
  height: 22px;
  text-align: left;
  font-size: 13px;
  line-height: 20px;
  border: 1px solid #aaa;
  border-width: 1px 1px 1px 0;
  background: #f0f0f0;
}
.side-band {
  height: 27px;
  background: linear-gradient(#f8faff 0 8px, #d3dbee 9px, #dde4f4);
  border-right: 1px solid #999;
  border-bottom: 1px solid #777;
}
.tree {
  flex: 1;
  margin: 0;
  padding: 2px 0 0;
  list-style: none;
  overflow: hidden;
  background: #fff;
  border-right: 1px solid #888;
  font-size: 12px;
  line-height: 16px;
}
.tree li { height: 16px; margin-left: -5px; white-space: nowrap; }
.tree .root { margin-left: -11px; }
.tree span { font-family: "Liberation Mono", monospace; font-size: 10px; }
.tree .chosen {
  width: 47px;
  line-height: 14px;
  background: #f3f3f3;
  border: 1px solid #d5d5d5;
  border-radius: 3px;
}

/* Toolbars */
.main { flex: 1; min-width: 0; display: flex; flex-direction: column; }
.bars { display: flex; flex-direction: column; align-items: flex-start; }
.bar-row { display: flex; }
.bar {
  flex: none;
  height: 31px;
  display: flex;
  align-items: center;
  white-space: nowrap;
  border: 1px solid #ccc;
  border-width: 0 1px 1px 0;
  box-shadow: inset 0 1px #fafafa;
}
.bars .bar:last-child { height: 31px; }
.dots {
  flex: none;
  align-self: stretch;
  width: 4px;
  margin: 2px 4px 1px 1px;
  background: radial-gradient(circle at 2px 2px, #b5b5b5 1px, transparent 2px) 0 0 / 4px 4px;
}
.bar > .dots { margin-right: 2px; }
.tool {
  flex: none;
  height: 24px;
  display: inline-flex;
  align-items: center;
  gap: 4px;
  padding: 0 2px 0 3px;
  border: 1px solid transparent;
  white-space: nowrap;
}
.tool.on {
  background: linear-gradient(#dcdcdc, #ececec);
  border-color: #555;
  border-radius: 3px;
  box-shadow: inset 1px 1px 2px #999;
}
.off { color: #858585; }
.sep { flex: none; width: 1px; height: 21px; margin: 0 2px 0 3px; background: #808080; }
.caret { flex: none; width: 7px; height: 5px; fill: #000; }
.caret.small { width: 6px; height: 4px; margin-right: -2px; }
.caret.off { fill: #777; }

.combo {
  flex: none;
  display: flex;
  width: 68px;
  height: 24px;
  margin: 0 4px 0 0;
  background: #fff;
}
.combo.narrow { width: 56px; }
.bar > .dots + .combo { margin-left: 3px; }
.combo + .sep { margin-left: 0; }
.combo select {
  flex: 1;
  min-width: 0;
  margin-right: 3px;
  padding: 0 0 0 2px;
  appearance: none;
  border: 0;
  background: transparent;
}
.arrow {
  flex: none;
  width: 13px;
  display: flex;
  align-items: center;
  justify-content: center;
  background: linear-gradient(90deg, #f4f4f4, #d8d8d8);
  border: 1px solid #777;
}
.arrow svg { width: 8px; height: 5px; }
.combo.disabled { width: 53px; margin: 0 2px; background: #f5f5f5; }
.disabled .arrow { background: #f2f2f2; border-color: #b5b5b5; fill: #777; }

.num { margin: 0 4px 0 3px; color: #858585; font-size: 16px; }
.spin + .num { margin-left: 4px; }
.num + .num { margin-left: 2px; }
.num.last { margin-right: 0; }
.num.degree { margin-right: 2px; }
.spin { display: flex; height: 22px; }
.spin input {
  width: 41px;
  padding: 0 4px 0 0;
  text-align: right;
  border: 1px solid #f8f8f8;
  background: #f1f1f1;
  color: #858585;
}
.spin.angle input { width: 51px; }
.steps {
  width: 13px;
  display: flex;
  flex-direction: column;
  align-items: center;
  justify-content: space-around;
  border: 1px solid #bbb;
  background: linear-gradient(#f3f3f3 0 9px, #bbb 9px 10px, #f3f3f3 10px);
  fill: #888;
}
.steps svg { width: 6px; height: 4px; }
.check {
  width: 13px;
  height: 13px;
  margin: 0 8px 0 1px;
  appearance: none;
  border: 1px solid #8a8a8a;
  background: linear-gradient(135deg, #d4d4d4, #fff);
  box-shadow: inset 0 0 0 1px #f4f4f4;
}
.rot { margin-right: 6px; font-size: 12px; }

/* Drawing area */
.canvas { display: block; width: 100%; height: 295px; background: #000; }
.axis text { fill: #fff; font: 16px "DejaVu Sans", sans-serif; text-anchor: middle; }
.axis .serif { font: 18px "Liberation Serif", serif; }
.rebar text { fill: #fff; font: 8px "Noto Sans", "Noto Sans CJK SC", sans-serif; }

/* Bottom dock */
.dock { flex: 1; display: flex; padding-top: 2px; }
.dock-grip {
  flex: none;
  width: 12px;
  padding: 1px 0 0 1px;
  background: radial-gradient(circle at 2px 2px, #b0b0b0 1px, transparent 1px) 1px 14px / 5px 5px;
}
.dock-close { display: flex; height: 14px; width: 11px; background: #f0f0f0; }
.dock-main {
  position: relative;
  flex: 1;
  min-width: 0;
  background: #fff;
  border-left: 1px solid #aaa;
}
.dock-bar {
  height: 32px;
  display: flex;
  align-items: center;
  background: linear-gradient(#f7f9fe 0, #e9edf8 8px, #ced7eb 10px, #dfe6f6);
  border-bottom: 1px solid #a5a5ad;
  white-space: nowrap;
}
.nav { flex: none; width: 24px; display: flex; justify-content: center; }
.nav + .sep { margin-left: 0; }
.dock-bar .sep { margin-right: 1px; }
.close-btn { margin-left: 4px; }
.dock-bar .close-btn + .sep { margin-right: 6px; }

.grid {
  width: 1480px;
  margin-left: 1px;
  table-layout: fixed;
  border-spacing: 0;
  font: 13px/15px "Liberation Mono", "Noto Sans CJK SC", monospace;
}
.w29 { width: 29px; }
.w33 { width: 33px; }
.w49 { width: 49px; }
.w53 { width: 53px; }
.w61 { width: 61px; }
.w71 { width: 71px; }
.w81 { width: 81px; }
.w156 { width: 156px; }
.w166 { width: 166px; }
.w171 { width: 171px; }
.w201 { width: 201px; }
.grid th, .grid td {
  height: 35px;
  padding: 1px 0 0 2px;
  overflow: hidden;
  border: 1px solid #b9b9b9;
  border-width: 0 1px 1px 0;
}
.grid th {
  padding: 1px 0 0;
  font-weight: 400;
  background: linear-gradient(#fff, #efefef);
}
.grid tbody th { padding-right: 7px; }
.grid thead th { height: 20px; padding-top: 2px; font-size: 15px; white-space: nowrap; }
.grid b { font-weight: 400; font-size: 13px; }
.grid td { background: #cbffd9; }
.grid .hot { background: #ffd08a; color: #600030; }
.grid thead .hot { background: linear-gradient(#f9d79b, #eeb765); }
.grid tbody .hot { padding-right: 0; }
.grid .cn { padding-top: 0; font-size: 15px; }
.grid td:nth-child(2) { border-right-color: #000; }
.grid .blank td, .grid .blank th { height: 19px; }
.grid .blank td { background: #fff; }
.grade svg { display: block; width: 11px; height: 12px; margin: 0 auto; }
.grid .picked {
  position: relative;
  overflow: visible;
  background: #b3f0dc;
  outline: 3px solid #7f7f7f;
  outline-offset: -2px;
}
.picked::after {
  content: "";
  position: absolute;
  z-index: 1;
  right: -4px;
  bottom: -4px;
  width: 7px;
  height: 7px;
  background: #7f7f7f;
  border: 1px solid #fff;
}
.shape {
  display: block;
  width: 150px;
  margin-left: 21px;
  padding-right: 12px;
  border-bottom: 2px solid #000;
  text-align: center;
  font: 12px/12px "Liberation Serif", serif;
}

.float-btn {
  position: absolute;
  right: 0;
  top: 185px;
  width: 15px;
  height: 26px;
  display: flex;
  align-items: center;
  padding-left: 2px;
  border: 2px solid #9fc0e0;
  border-right: 0;
  border-radius: 4px 0 0 4px;
  background: #f2f8ff;
}
```
